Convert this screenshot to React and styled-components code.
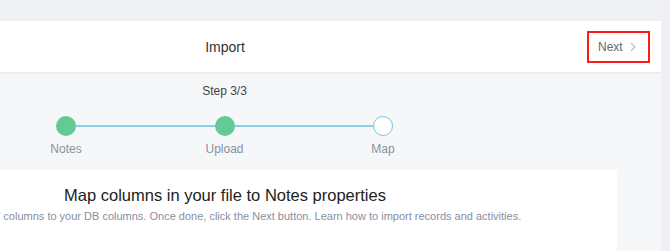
import React from "react";
import styled, { createGlobalStyle } from "styled-components";

const GlobalStyle = createGlobalStyle`
  html, body {
    margin: 0;
    padding: 0;
    background: #eff0f4;
    font-family: "Liberation Sans", Arial, sans-serif;
    overflow: hidden;
  }
`;

const Page = styled.div`
  padding-top: 21px;
  padding-right: 9px;
  height: 251px;
  box-sizing: border-box;
`;

const Panel = styled.div`
  background: #f6f7f9;
  height: 230px;
  overflow: hidden;
`;

const Header = styled.header`
  height: 51px;
  background: #fff;
  box-shadow: 0 1px 2px rgba(0, 0, 0, 0.07);
  display: grid;
  grid-template-columns: 450px 1fr;
  align-items: center;
`;

const Title = styled.h1`
  margin: 0;
  font-size: 14px;
  font-weight: 400;
  color: #333;
  text-align: center;
`;

const NextButton = styled.button`
  justify-self: end;
  margin-right: 11px;
  height: 32px;
  width: 63px;
  box-sizing: border-box;
  border: 2px solid #ff1a1a;
  background: transparent;
  display: flex;
  align-items: center;
  gap: 7px;
  padding: 0 0 0 9px;
  font-family: inherit;
  font-size: 12px;
  color: #666;
  cursor: pointer;
`;

const StepperSection = styled.section`
  padding-top: 12px;
  width: 450px;
  display: flex;
  flex-direction: column;
  align-items: center;
`;

const StepCount = styled.div`
  font-size: 12px;
  line-height: 14px;
  color: #444;
  margin-left: -1px;
`;

const Steps = styled.div`
  position: relative;
  display: flex;
  justify-content: space-between;
  width: 397px;
  margin-top: 18px;
  align-self: flex-start;
  margin-left: 26px;

  &::before {
    content: "";
    position: absolute;
    left: 40px;
    right: 40px;
    top: 9px;
    height: 2px;
    background: #8ccfe4;
  }
`;

const Step = styled.div`
  width: 80px;
  display: flex;
  flex-direction: column;
  align-items: center;
  position: relative;
`;

const Dot = styled.span`
  width: 20px;
  height: 20px;
  box-sizing: border-box;
  border-radius: 50%;
  background: ${(p) => (p.$done ? "#62cb95" : "#fff")};
  border: ${(p) => (p.$done ? "none" : "1.5px solid #79c4de")};
`;

const StepLabel = styled.span`
  margin-top: 6px;
  font-size: 12px;
  line-height: 14px;
  color: #8a8fa2;
`;

const Card = styled.section`
  margin-top: 14px;
  width: 617px;
  height: 81px;
  background: #fff;
  border-radius: 0 3px 0 0;
  padding-top: 15px;
  box-sizing: border-box;
`;

const CardInner = styled.div`
  width: 450px;
  display: flex;
  flex-direction: column;
  align-items: center;
`;

const CardTitle = styled.h2`
  margin: 0;
  font-size: 16.5px;
  line-height: 20px;
  font-weight: 400;
  color: #222;
`;

const CardText = styled.p`
  margin: 4px 0 0;
  font-size: 11px;
  line-height: 14px;
  color: #8a8e9e;
  white-space: nowrap;
`;

const Chevron = () => (
  <svg width="6" height="10" viewBox="0 0 6 10" fill="none">
    <path d="M1 1l4 4-4 4" stroke="#bdbdbd" strokeWidth="1.1" />
  </svg>
);

const steps = [
  { label: "Notes", done: true },
  { label: "Upload", done: true },
  { label: "Map", done: false },
];

export default function App() {
  return (
    <Page>
      <GlobalStyle />
      <Panel>
        <Header>
          <Title>Import</Title>
          <NextButton>
            Next <Chevron />
          </NextButton>
        </Header>
        <StepperSection>
          <StepCount>Step 3/3</StepCount>
          <Steps>
            {steps.map((s) => (
              <Step key={s.label}>
                <Dot $done={s.done} />
                <StepLabel>{s.label}</StepLabel>
              </Step>
            ))}
          </Steps>
        </StepperSection>
        <Card>
          <CardInner>
            <CardTitle>Map columns in your file to Notes properties</CardTitle>
            <CardText>
              Map your CSV columns to your DB columns. Once done, click the Next button. Learn how to import records and activities.
            </CardText>
          </CardInner>
        </Card>
      </Panel>
    </Page>
  );
}
